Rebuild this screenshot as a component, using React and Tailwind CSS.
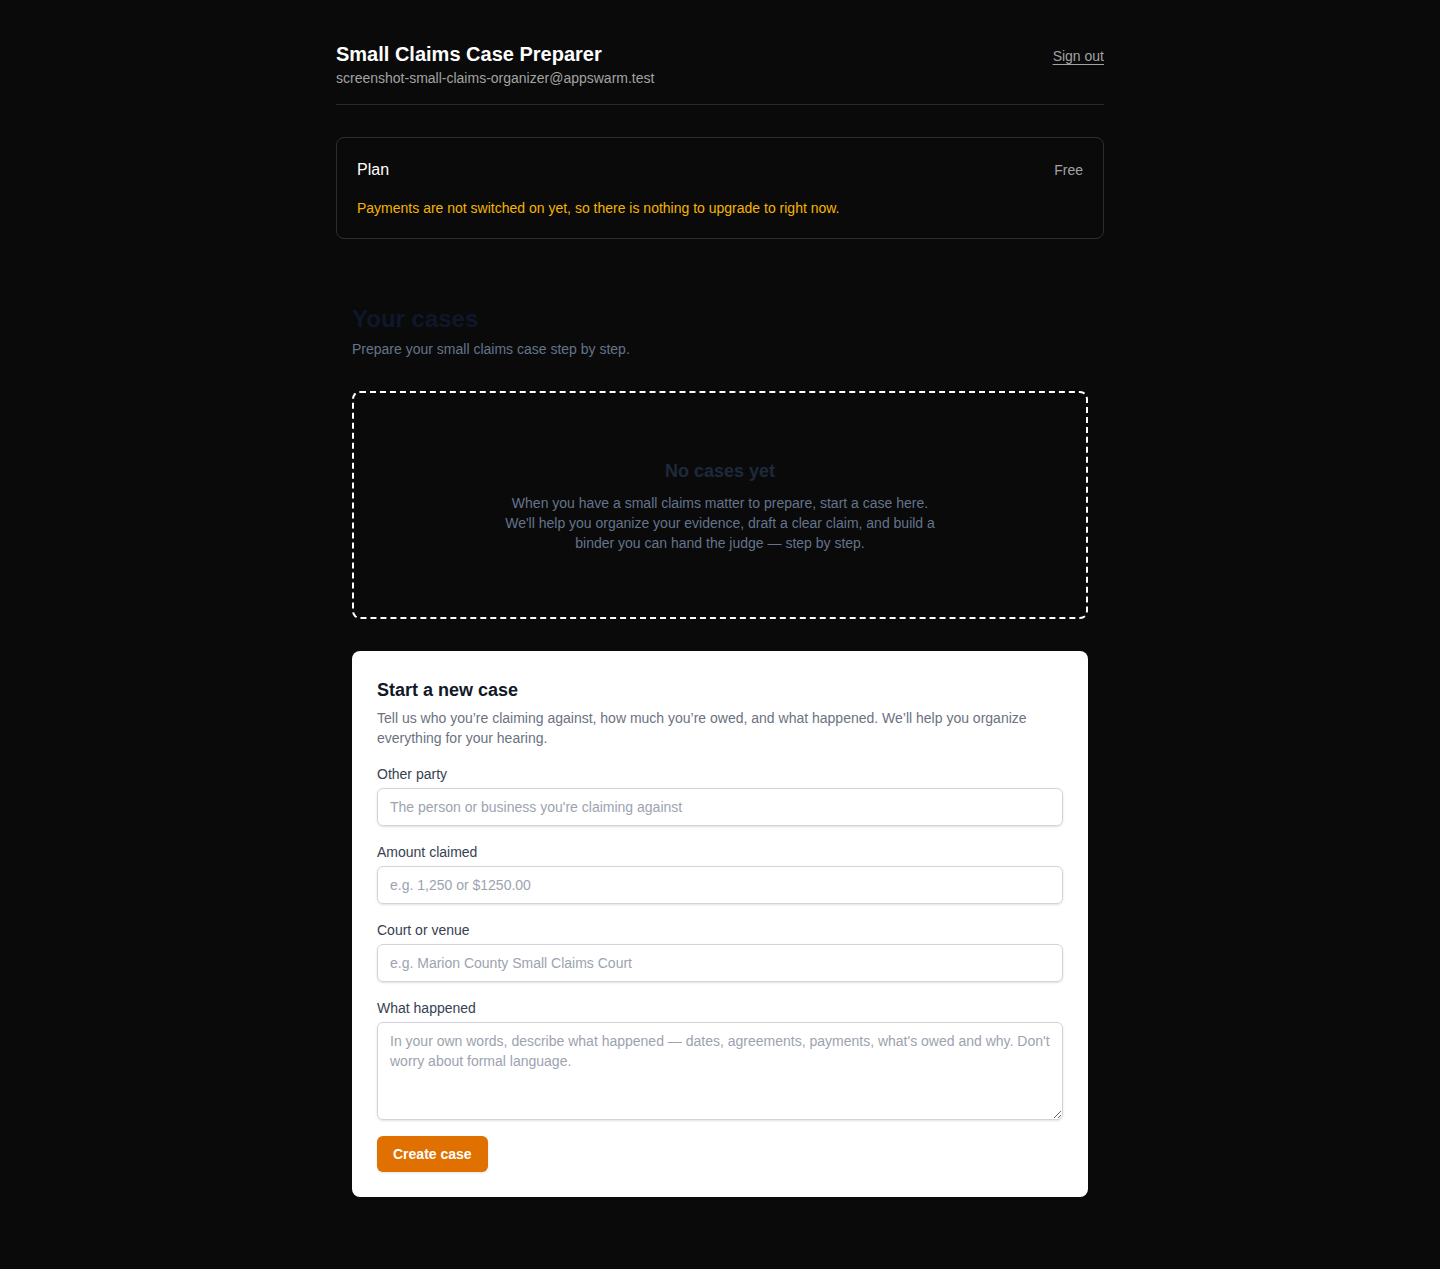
export default function App() {
  return (
    <div className="min-h-[1269px] bg-[#0a0a0a] font-['Liberation_Sans',Arial,sans-serif]">
      <div className="mx-auto w-[768px] pt-[41px] pb-[72px]">
        <header className="flex items-start justify-between border-b border-[#2a2a2a] pb-[16px]">
          <div>
            <h1 className="text-[20px] font-bold leading-[26px] text-white">Small Claims Case Preparer</h1>
            <p className="mt-[1px] text-[14px] leading-[20px] text-[#a3a3a3]">screenshot-small-claims-organizer@appswarm.test</p>
          </div>
          <a href="#" className="mt-[5px] text-[14px] leading-[20px] text-[#a3a3a3] underline underline-offset-[3px]">Sign out</a>
        </header>

        <section className="mt-[32px] rounded-lg border border-[#2e2e2e] px-[20px] pt-[22px] pb-[21px]">
          <div className="flex items-center justify-between">
            <span className="text-[16px] leading-[20px] text-white">Plan</span>
            <span className="text-[14px] leading-[20px] text-[#a3a3a3]">Free</span>
          </div>
          <p className="mt-[19px] text-[14px] leading-[18px] text-[#f5b400]">
            Payments are not switched on yet, so there is nothing to upgrade to right now.
          </p>
        </section>

        <main className="mt-[64px] px-[16px]">
          <h2 className="text-[24px] font-bold leading-[32px] text-[#0f172a]">Your cases</h2>
          <p className="mt-[4px] text-[14px] leading-[20px] text-[#64748b]">Prepare your small claims case step by step.</p>

          <div className="mt-[32px] flex h-[228px] flex-col items-center justify-center rounded-lg border-2 border-dashed border-white text-center">
            <h3 className="text-[18px] font-semibold leading-[26px] text-[#1e293b]">No cases yet</h3>
            <p className="mt-[9px] w-[440px] text-[14px] leading-[20px] text-[#64748b]">
              When you have a small claims matter to prepare, start a case here. We'll help you organize your evidence, draft a clear claim, and build a binder you can hand the judge — step by step.
            </p>
          </div>

          <form className="mt-[32px] rounded-lg bg-white px-[25px] pt-[27px] pb-[25px]" onSubmit={(e) => e.preventDefault()}>
            <h3 className="text-[18px] font-bold leading-[24px] text-[#111827]">Start a new case</h3>
            <p className="mt-[6px] text-[14px] leading-[20px] text-[#6b7280]">
              Tell us who you’re claiming against, how much you’re owed, and what happened. We’ll help you organize everything for your hearing.
            </p>

            <label className="mt-[16px] block text-[14px] leading-[20px] text-[#374151]">Other party</label>
            <input
              className="mt-[4px] block h-[38px] w-full rounded-md border border-[#d1d5db] px-[12px] text-[14px] shadow-sm outline-none placeholder:text-[#9ca3af]"
              placeholder="The person or business you're claiming against"
            />

            <label className="mt-[16px] block text-[14px] leading-[20px] text-[#374151]">Amount claimed</label>
            <input
              className="mt-[4px] block h-[38px] w-full rounded-md border border-[#d1d5db] px-[12px] text-[14px] shadow-sm outline-none placeholder:text-[#9ca3af]"
              placeholder="e.g. 1,250 or $1250.00"
            />

            <label className="mt-[16px] block text-[14px] leading-[20px] text-[#374151]">Court or venue</label>
            <input
              className="mt-[4px] block h-[38px] w-full rounded-md border border-[#d1d5db] px-[12px] text-[14px] shadow-sm outline-none placeholder:text-[#9ca3af]"
              placeholder="e.g. Marion County Small Claims Court"
            />

            <label className="mt-[16px] block text-[14px] leading-[20px] text-[#374151]">What happened</label>
            <textarea
              rows={4}
              className="mt-[4px] block h-[98px] w-full rounded-md border border-[#d1d5db] px-[12px] py-[8px] text-[14px] leading-[20px] shadow-sm outline-none placeholder:text-[#9ca3af]"
              placeholder="In your own words, describe what happened — dates, agreements, payments, what's owed and why. Don't worry about formal language."
            />

            <button type="submit" className="mt-[16px] h-[36px] rounded-md bg-[#e07000] px-[16px] text-[14px] font-bold text-white shadow-sm">
              Create case
            </button>
          </form>
        </main>
      </div>
    </div>
  );
}
